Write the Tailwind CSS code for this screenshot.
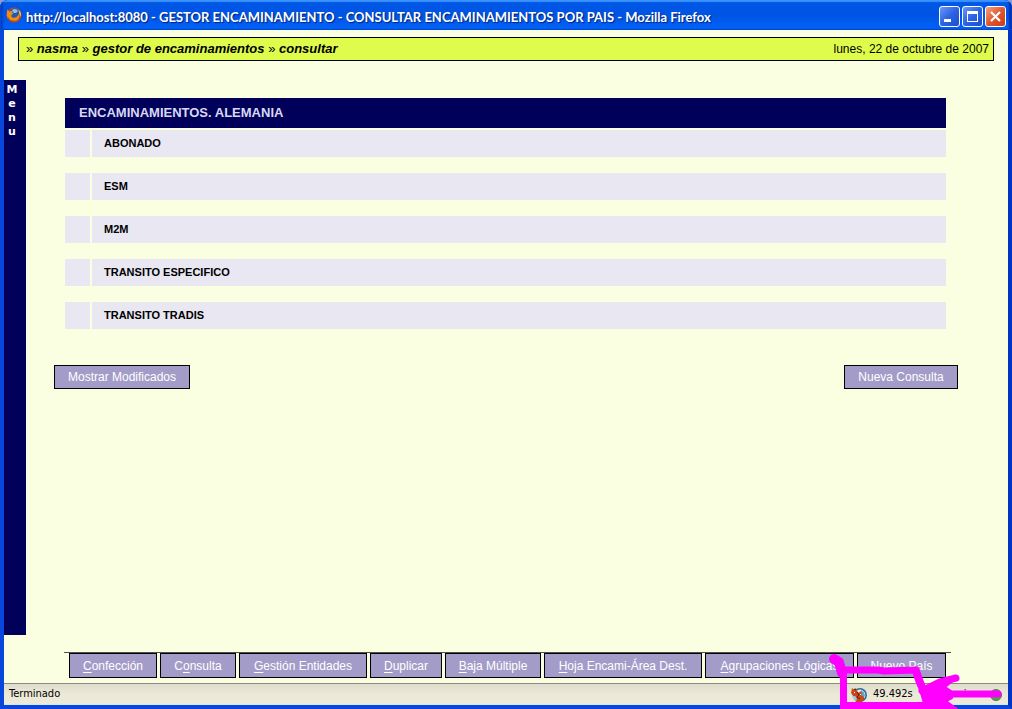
<!DOCTYPE html>
<html lang="es">
<head>
<meta charset="utf-8">
<title>GESTOR ENCAMINAMIENTO - CONSULTAR ENCAMINAMIENTOS POR PAIS</title>
<script src="https://cdn.jsdelivr.net/npm/@tailwindcss/browser@4"></script>
</head>
<body class="bg-[#8a9bd0] font-['Liberation_Sans',Arial,sans-serif] text-xs text-black">
<div class="relative flex min-h-screen flex-col overflow-hidden rounded-t-lg bg-[#0040d8]">

  <header class="flex h-[30px] items-center bg-linear-to-b from-[#0058e6] via-[#0054e3] to-[#0063fb] px-[6px] shadow-[inset_0_2px_1px_#3a93ff,inset_0_-1px_0_#0046c8,inset_3px_0_2px_#0040c8,inset_-3px_0_2px_#0030b0]">
    <svg class="size-4 shrink-0" viewBox="0 0 16 16" aria-hidden="true">
      <circle cx="8" cy="8" r="7.4" fill="#c8480c"/>
      <circle cx="8.6" cy="6.9" r="5.6" fill="#2458a8"/>
      <path d="M6 3c2-2 5-1 6 1l-2 2-2 0-1-1z" fill="#7fc4ec"/>
      <path d="M1 2.4c1 .6 1.600 1.200 2.200 2C4.500 3.600 6 3.700 7 4.800 5.800 5.200 6 6 7.300 6.500 6.500 8 5.200 7.800 5.300 9c.4 2.400 5 2.400 6.500-.5.8 0 1.300-1.500.9-3C14.800 8 13.500 12.500 9.500 14 5 15.400.8 12.500.7 8c0-2 .6-3.600.3-5.600z" fill="#ee8c1c"/>
      <path d="M12 2.200c3 2 3.800 5.200 2.600 8-.3-1.500-.5-3-1.600-4.200.2-1.600-.3-2.800-1-3.800z" fill="#f8c43c"/>
      <path d="M1.800 9.500c1 3.500 4 5 8 4-2.300 2-7.500.7-8.200-3z" fill="#a83008"/>
    </svg>
    <h1 class="ml-1 mt-1 flex-1 whitespace-nowrap font-['Lato',sans-serif] text-[13px] font-bold leading-5 text-white [text-shadow:1px_1px_1px_#00207a]">http://localhost:8080 - GESTOR ENCAMINAMIENTO - CONSULTAR ENCAMINAMIENTOS POR PAIS - Mozilla Firefox</h1>
    <div class="mt-[2px] flex gap-[2px]">
      <button type="button" aria-label="Minimizar" class="size-[21px] rounded-[3px] border border-white bg-linear-to-br from-[#6d97f5] via-[#2c62e4] to-[#1c4fd0]">
        <svg viewBox="0 0 19 19" class="size-full" aria-hidden="true"><path d="M4 12h7v3H4z" fill="#fff"/></svg>
      </button>
      <button type="button" aria-label="Maximizar" class="size-[21px] rounded-[3px] border border-white bg-linear-to-br from-[#6d97f5] via-[#2c62e4] to-[#1c4fd0]">
        <svg viewBox="0 0 19 19" class="size-full" aria-hidden="true"><path d="M4 4h11v11H4zM5 7v7h9V7z" fill="#fff" fill-rule="evenodd"/></svg>
      </button>
      <button type="button" aria-label="Cerrar" class="size-[21px] rounded-[3px] border border-white bg-linear-to-br from-[#f0a080] via-[#e05830] to-[#c83c10]">
        <svg viewBox="0 0 19 19" class="size-full" aria-hidden="true"><path d="M5 5l9 9M14 5l-9 9" stroke="#fff" stroke-width="2.200"/></svg>
      </button>
    </div>
  </header>

  <div class="flex flex-1 flex-col border-x-4 border-b-4 border-[#0846dc] bg-[#faffe2] border-r-[#0034c4]">
    <nav aria-label="Ruta" class="mx-[14px] mt-[7px] flex h-6 items-center justify-between border border-black bg-[#dffc4c] pl-[7px] pr-1">
      <p class="text-[13px] font-bold italic"><span class="font-normal not-italic">»</span> <a href="#">nasma</a> <span class="font-normal not-italic">»</span> <a href="#">gestor de encaminamientos</a> <span class="font-normal not-italic">»</span> <a href="#">consultar</a></p>
      <p>lunes, 22 de octubre de 2007</p>
    </nav>

    <div class="mt-[19px] flex flex-1">
      <aside class="mb-12 w-[22px] bg-[#00005a] pl-[2px] pt-[3px] font-bold text-white">
        <button type="button" class="flex w-3 flex-col items-center font-['DejaVu_Sans',sans-serif] text-[11px] font-bold leading-[14px]" aria-label="Menu"><span>M</span><span>e</span><span>n</span><span>u</span></button>
      </aside>

      <main class="flex flex-1 flex-col pt-[18px]">
        <div class="ml-[39px] mr-[62px]">
          <table class="w-full table-fixed border-separate border-spacing-0 text-left text-[11px]">
            <colgroup><col class="w-[25px]"><col></colgroup>
            <thead>
              <tr><th colspan="2" class="h-8 border-b-2 border-[#faffe2] bg-[#00005a] pl-[14px] text-[13px] font-bold text-[#d8d8f4]">ENCAMINAMIENTOS. ALEMANIA</th></tr>
            </thead>
            <tbody>
              <tr><td class="h-[43px] border-b-[16px] border-[#faffe2] bg-[#e8e7f2]"></td><th scope="row" class="border-b-[16px] border-l-2 border-[#faffe2] bg-[#e8e7f2] pl-3">ABONADO</th></tr>
              <tr><td class="h-[43px] border-b-[16px] border-[#faffe2] bg-[#e8e7f2]"></td><th scope="row" class="border-b-[16px] border-l-2 border-[#faffe2] bg-[#e8e7f2] pl-3">ESM</th></tr>
              <tr><td class="h-[43px] border-b-[16px] border-[#faffe2] bg-[#e8e7f2]"></td><th scope="row" class="border-b-[16px] border-l-2 border-[#faffe2] bg-[#e8e7f2] pl-3">M2M</th></tr>
              <tr><td class="h-[43px] border-b-[16px] border-[#faffe2] bg-[#e8e7f2]"></td><th scope="row" class="border-b-[16px] border-l-2 border-[#faffe2] bg-[#e8e7f2] pl-3">TRANSITO ESPECIFICO</th></tr>
              <tr><td class="h-[43px] border-b-[16px] border-[#faffe2] bg-[#e8e7f2]"></td><th scope="row" class="border-b-[16px] border-l-2 border-[#faffe2] bg-[#e8e7f2] pl-3">TRANSITO TRADIS</th></tr>
            </tbody>
          </table>
        </div>

        <div class="ml-7 mr-[50px] mt-5 flex justify-between">
          <button type="button" class="h-6 w-[136px] border border-black bg-[#a49cc8] text-white">Mostrar Modificados</button>
          <button type="button" class="h-6 w-[114px] border border-black bg-[#a49cc8] text-white">Nueva Consulta</button>
        </div>

        <div class="ml-[38px] mr-[57px] mt-auto flex gap-[3px] whitespace-nowrap border-t border-[#50504c] pb-[5px] pl-[5px] pr-[5px] text-white">
          <button type="button" class="h-[25px] w-[88px] border border-black bg-[#a49cc8]"><u class="underline-offset-2">C</u>onfección</button>
          <button type="button" class="h-[25px] w-[76px] border border-black bg-[#a49cc8]">C<u class="underline-offset-2">o</u>nsulta</button>
          <button type="button" class="h-[25px] w-[128px] border border-black bg-[#a49cc8]"><u class="underline-offset-2">G</u>estión Entidades</button>
          <button type="button" class="h-[25px] w-[72px] border border-black bg-[#a49cc8]"><u class="underline-offset-2">D</u>uplicar</button>
          <button type="button" class="h-[25px] w-[96px] border border-black bg-[#a49cc8]"><u class="underline-offset-2">B</u>aja Múltiple</button>
          <button type="button" class="h-[25px] w-[158px] border border-black bg-[#a49cc8]"><u class="underline-offset-2">H</u>oja Encami-Área Dest.</button>
          <button type="button" class="h-[25px] w-[149px] border border-black bg-[#a49cc8]"><u class="underline-offset-2">A</u>grupaciones Lógicas</button>
          <button type="button" class="h-[25px] w-[89px] border border-black bg-[#a49cc8]"><u class="underline-offset-2">N</u>uevo País</button>
        </div>
      </main>
    </div>

    <footer class="flex h-[22px] items-center border-t border-[#8c8a80] bg-linear-to-b from-[#dedccc] via-[#ece9d8] to-[#ece9d8] pl-[5px] pr-[6px] font-['DejaVu_Sans_Condensed','DejaVu_Sans',sans-serif] text-[11px] shadow-[inset_0_-1px_0_#d4e8f8]">
      <p class="flex-1">Terminado</p>
      <svg class="mr-[6px] size-4" viewBox="0 0 16 16" aria-hidden="true">
        <circle cx="9" cy="8" r="6.200" fill="#e8f2f8" stroke="#306c98" stroke-width="1.600"/>
        <path d="M10 3l3 2 1 4-3 3-1-4z" fill="#62a4ca"/>
        <path d="M1 1l2 1.500L5 1l1 3 2 2 1-2 2 2-1 2 3 2 0 3-4 3-4-1-2-3 2-2-3-1-2-3z" fill="#c84818"/>
        <path d="M1 9l3 0 2 3-1 2-2-1z" fill="#9cc8e4"/>
        <path d="M6 5l2 3-2 2 3 2M3 2l2 1" fill="none" stroke="#601c08"/>
        <path d="M3 5h1v1H3zM9 7h1v1H9z" fill="#fff"/>
      </svg>
      <p class="w-[81px]">49.492s</p>
      <p class="w-8">min</p>
      <span class="ml-1 size-3 rounded-full border border-[#557a50] bg-[#48a848]"></span>
    </footer>
  </div>

  <!-- Hand-drawn highlight over the timing indicator -->
  <svg class="pointer-events-none absolute bottom-0 right-0 h-[60px] w-[190px]" viewBox="822 649 190 60" fill="none" stroke="#ff00ff" stroke-linecap="round" stroke-linejoin="round" aria-hidden="true">
    <path d="M834 659l5 3 3 11" stroke-width="10"/>
    <path d="M844 670h34l6 1 32-1" stroke-width="7"/>
    <path d="M843.500 671v38" stroke-width="7" stroke-linecap="butt"/>
    <path d="M841 705.500h88" stroke-width="7" stroke-linecap="butt"/>
    <path d="M916 671l3 9 5 12 4 15" stroke-width="8"/>
    <path d="M922 691l18-9 16-4M938 694h60" stroke-width="7"/>
    <path d="M920 690l20-9 14-1-9 7 6 4 1 7-6 3 11 8h-30z" fill="#ff00ff" stroke-width="2"/>
  </svg>
</div>
</body>
</html>
